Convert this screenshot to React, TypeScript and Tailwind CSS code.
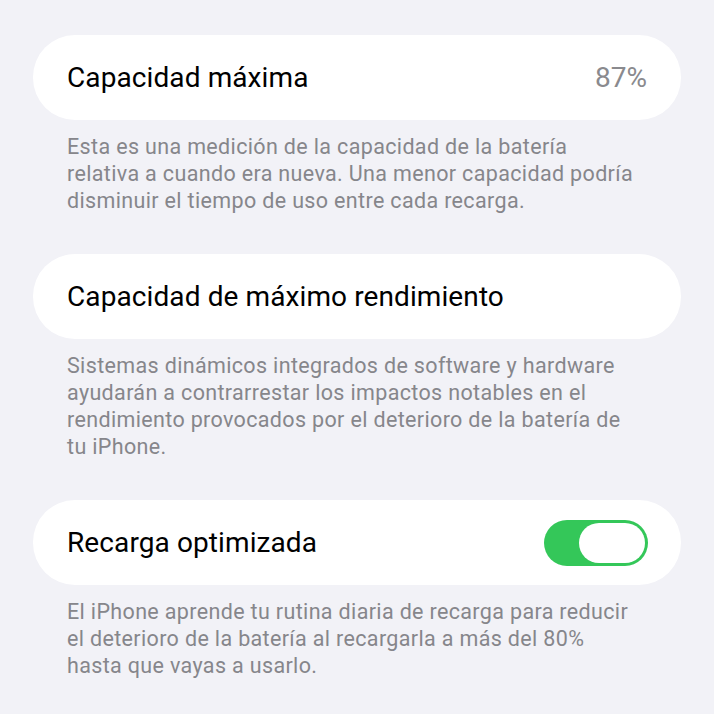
import React from "react";

function Toggle() {
  return (
    <div className="w-[104px] h-[46px] rounded-full bg-[#34c759] p-[3px] flex justify-end">
      <div className="w-[66px] h-[40px] rounded-full bg-white" />
    </div>
  );
}

function Card({ title, right }: { title: string; right?: React.ReactNode }) {
  return (
    <div className="mx-[33px] h-[85px] rounded-[42px] bg-white pl-[34px] pr-[34px] flex items-center justify-between">
      <span className="text-[28px] text-black tracking-[0.1px]">{title}</span>
      {right}
    </div>
  );
}

function Note({ lines }: { lines: string[] }) {
  return (
    <div className="ml-[67px] pt-[13px] pb-[40px] text-[21.5px] leading-[27px] tracking-[0.35px] text-[#86868b]">
      {lines.map((l, i) => (
        <div key={i} className="whitespace-nowrap">
          {l}
        </div>
      ))}
    </div>
  );
}

export default function App() {
  return (
    <div
      className="w-[714px] h-[714px] bg-[#f2f2f7] pt-[35px] overflow-hidden"
      style={{ fontFamily: "Roboto, 'Noto Sans', sans-serif" }}
    >
      <Card
        title="Capacidad máxima"
        right={<span className="text-[28px] text-[#8a8a8e]">87%</span>}
      />
      <Note
        lines={[
          "Esta es una medición de la capacidad de la batería",
          "relativa a cuando era nueva. Una menor capacidad podría",
          "disminuir el tiempo de uso entre cada recarga.",
        ]}
      />
      <Card title="Capacidad de máximo rendimiento" />
      <Note
        lines={[
          "Sistemas dinámicos integrados de software y hardware",
          "ayudarán a contrarrestar los impactos notables en el",
          "rendimiento provocados por el deterioro de la batería de",
          "tu iPhone.",
        ]}
      />
      <div className="[&>div]:pr-[33px]">
        <Card title="Recarga optimizada" right={<Toggle />} />
      </div>
      <Note
        lines={[
          "El iPhone aprende tu rutina diaria de recarga para reducir",
          "el deterioro de la batería al recargarla a más del 80%",
          "hasta que vayas a usarlo.",
        ]}
      />
    </div>
  );
}
